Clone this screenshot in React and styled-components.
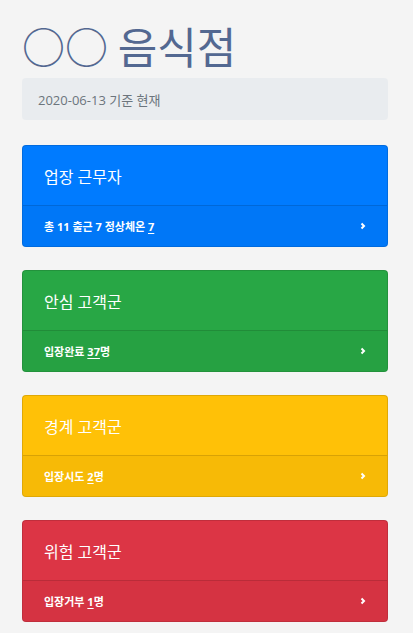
import React from "react";
import styled, { createGlobalStyle } from "styled-components";

const GlobalStyle = createGlobalStyle`
  body {
    margin: 0;
    background: #f4f4f4;
    font-family: "Open Sans", "Noto Sans CJK KR", sans-serif;
  }
`;

const groups = [
  {
    title: "업장 근무자",
    color: "#007bff",
    footer: (
      <>
        총 11 출근 7 정상체온 <u>7</u>
      </>
    ),
  },
  {
    title: "안심 고객군",
    color: "#28a745",
    footer: (
      <>
        입장완료 <u>37</u>명
      </>
    ),
  },
  {
    title: "경계 고객군",
    color: "#ffc107",
    footer: (
      <>
        입장시도 <u>2</u>명
      </>
    ),
  },
  {
    title: "위험 고객군",
    color: "#dc3545",
    footer: (
      <>
        입장거부 <u>1</u>명
      </>
    ),
  },
];

const App = () => {
  return (
    <>
      <GlobalStyle />
      <Page>
        <Title>○○ 음식점</Title>
        <DateBox>2020-06-13 기준 현재</DateBox>
        <CardList>
          {groups.map((g) => (
            <Card key={g.title} $bg={g.color}>
              <CardBody>{g.title}</CardBody>
              <CardFooter>
                <span>{g.footer}</span>
                <Chevron viewBox="0 0 6 8">
                  <path d="M1.5 1.5 L4 4 L1.5 6.5" />
                </Chevron>
              </CardFooter>
            </Card>
          ))}
        </CardList>
      </Page>
    </>
  );
};

const Page = styled.div`
  padding: 20px 25px 12px 22px;
`;

const Title = styled.h1`
  margin: 0 0 8px;
  font-family: "Noto Sans CJK KR", sans-serif;
  font-size: 43px;
  font-weight: 400;
  line-height: 50px;
  color: #536891;
`;

const DateBox = styled.div`
  background: #e9ecef;
  border-radius: 4px;
  height: 42px;
  padding: 0 16px;
  display: flex;
  align-items: center;
  font-size: 13px;
  color: #6c757d;
  margin-bottom: 25px;
`;

const CardList = styled.div`
  display: flex;
  flex-direction: column;
  gap: 23px;
`;

const Card = styled.div`
  background: ${(p) => p.$bg};
  color: #fff;
  border: 1px solid rgba(0, 0, 0, 0.125);
  border-radius: 4px;
  overflow: hidden;
`;

const CardBody = styled.div`
  height: 59px;
  padding: 0 21px;
  display: flex;
  align-items: center;
  font-size: 16px;
`;

const CardFooter = styled.div`
  height: 40px;
  padding: 0 21px;
  display: flex;
  align-items: center;
  justify-content: space-between;
  background: rgba(0, 0, 0, 0.03);
  border-top: 1px solid rgba(0, 0, 0, 0.125);
  font-size: 11px;
  font-weight: 700;
  u {
    text-underline-offset: 2px;
  }
`;

const Chevron = styled.svg`
  width: 6px;
  height: 8px;
  fill: none;
  stroke: #fff;
  stroke-width: 2;
`;

export default App;
